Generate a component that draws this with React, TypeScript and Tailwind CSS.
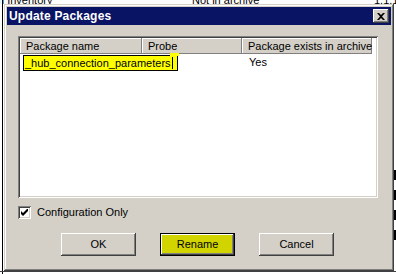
import React from "react";

const font = { fontFamily: '"Liberation Sans", Arial, sans-serif' };

function Btn({ label, def }: { label: string; def?: boolean }) {
  return (
    <div
      className={
        "w-[75px] h-[23px] flex items-center justify-center text-[11px] text-black " +
        (def
          ? "bg-[#d2d400] border border-black shadow-[inset_-1px_-1px_#404040,inset_1px_1px_#ffffff,inset_-2px_-2px_#808080]"
          : "bg-[#d4d0c8] shadow-[inset_-1px_-1px_#404040,inset_1px_1px_#ffffff,inset_-2px_-2px_#808080,inset_2px_2px_#d4d0c8]")
      }
    >
      {label}
    </div>
  );
}

function HeaderCell({ label, w }: { label: string; w: string }) {
  return (
    <div
      className={
        w +
        " shrink-0 h-[16px] flex items-center pl-[6px] whitespace-nowrap overflow-hidden text-[11px] text-black bg-[#d4d0c8] shadow-[inset_-1px_-1px_#808080,inset_1px_1px_#ffffff]"
      }
    >
      {label}
    </div>
  );
}

export default function App() {
  return (
    <div className="relative w-[396px] h-[274px] bg-white overflow-hidden" style={font}>
      {/* background application content */}
      <div className="absolute left-0 top-[-6px] w-[396px] h-[12px] text-[11px] leading-[12px] text-black">
        <span className="absolute left-[-2px] top-0">n Inventory</span>
        <span className="absolute left-[192px] top-0">Not in archive</span>
        <span className="absolute left-[374px] top-0">1.1.1</span>
      </div>
      <div className="absolute left-[2px] top-[0px] w-[1px] h-[274px] bg-black" />
      <div className="absolute left-0 top-[271px] w-[396px] h-[1px] bg-[#404040]" />
      <div className="absolute left-[394px] top-[0px] w-[2px] h-[274px] flex flex-col gap-[10px] pt-[170px]">
        <div className="h-[10px] bg-black" />
        <div className="h-[10px] bg-black" />
        <div className="h-[10px] bg-black" />
        <div className="h-[10px] bg-black" />
      </div>

      {/* dialog window */}
      <div className="absolute left-[4px] top-[4px] w-[390px] h-[267px] bg-[#d4d0c8] p-[3px] shadow-[inset_-1px_-1px_#404040,inset_1px_1px_#d4d0c8,inset_-2px_-2px_#808080,inset_2px_2px_#ffffff] flex flex-col">
        {/* title bar */}
        <div className="h-[18px] shrink-0 bg-[#0a1464] flex items-center justify-between pl-[2px] pr-[2px]">
          <span className="text-white font-bold text-[12px] tracking-[0.2px]">Update Packages</span>
          <div className="w-[16px] h-[14px] bg-[#d4d0c8] flex items-center justify-center shadow-[inset_-1px_-1px_#404040,inset_1px_1px_#ffffff,inset_-2px_-2px_#808080]">
            <svg width="8" height="7" viewBox="0 0 8 7">
              <path d="M0 0h2l2 2 2-2h2L5 3.5 8 7H6L4 5 2 7H0l3-3.5z" fill="#000" />
            </svg>
          </div>
        </div>

        {/* list view */}
        <div className="mt-[11px] ml-[11px] w-[360px] h-[162px] shrink-0 bg-white p-[2px] shadow-[inset_1px_1px_#808080,inset_-1px_-1px_#ffffff,inset_2px_2px_#404040,inset_-2px_-2px_#d4d0c8] flex flex-col">
          <div className="flex">
            <HeaderCell label="Package name" w="w-[122px]" />
            <HeaderCell label="Probe" w="w-[100px]" />
            <HeaderCell label="Package exists in archive" w="w-[130px]" />
          </div>
          <div className="flex items-center mt-[1px] h-[16px]">
            <div className="w-[122px] shrink-0 relative h-[16px]">
              <div className="absolute left-[3px] top-0 w-[155px] h-[16px] border border-black bg-[#ffff00] flex items-center pl-[1px] text-[11px] text-black whitespace-nowrap">
                <span>_hub_connection_parameters</span>
                <span className="w-[1px] h-[12px] bg-black ml-[1px]" />
              </div>
              <div className="absolute left-[150px] top-[-2px] w-[9px] h-[3px] bg-[#ffff00]" />
            </div>
            <div className="w-[100px] shrink-0" />
            <div className="w-[130px] shrink-0 pl-[7px] text-[11px] text-black mt-[-1px]">Yes</div>
          </div>
        </div>

        {/* checkbox */}
        <div className="mt-[6px] ml-[11px] flex items-center gap-[6px]">
          <div className="w-[13px] h-[13px] bg-white flex items-center justify-center shadow-[inset_1px_1px_#808080,inset_-1px_-1px_#ffffff,inset_2px_2px_#404040,inset_-2px_-2px_#d4d0c8]">
            <svg width="7" height="7" viewBox="0 0 7 7">
              <path d="M0 2v3l2 2 5-5V-1L2 4z" fill="#000" />
            </svg>
          </div>
          <span className="text-[11px] text-black">Configuration Only</span>
        </div>

        {/* buttons */}
        <div className="mt-[12px] ml-[54px] flex gap-[24px]">
          <Btn label="OK" />
          <Btn label="Rename" def />
          <Btn label="Cancel" />
        </div>
      </div>
    </div>
  );
}
